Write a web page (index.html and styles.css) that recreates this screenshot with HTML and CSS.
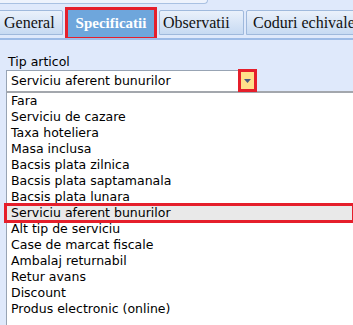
FILE: index.html
```html
<!DOCTYPE html>
<html lang="ro">
<head>
  <meta charset="UTF-8">
  <title>Specificatii articol</title>
  <link rel="stylesheet" href="styles.css">
</head>
<body>
<div class="frame-top"></div>
<div class="tabs">
  <div class="tab">General</div>
  <div class="tab active">Specificatii</div>
  <div class="tab">Observatii</div>
  <div class="tab">Coduri echivalente</div>
</div>
<div class="panel">
  <div class="label">Tip articol</div>
  <div class="combo">
    <div class="combo-value">Serviciu aferent bunurilor</div>
    <div class="combo-btn">
      <svg width="7" height="4" viewBox="0 0 7 4"><path d="M0 0h7L3.5 4z" fill="#4a5a80"/></svg>
    </div>
  </div>
  <ul class="list">
    <li>Fara</li>
    <li>Serviciu de cazare</li>
    <li>Taxa hoteliera</li>
    <li>Masa inclusa</li>
    <li>Bacsis plata zilnica</li>
    <li>Bacsis plata saptamanala</li>
    <li>Bacsis plata lunara</li>
    <li class="selected">Serviciu aferent bunurilor</li>
    <li>Alt tip de serviciu</li>
    <li>Case de marcat fiscale</li>
    <li>Ambalaj returnabil</li>
    <li>Retur avans</li>
    <li>Discount</li>
    <li>Produs electronic (online)</li>
  </ul>
</div>
</body>
</html>
```

FILE: styles.css
```css
* {
  box-sizing: border-box;
}
body {
  margin: 0;
  background: #dfe9fb;
  font-family: "DejaVu Sans", Verdana, sans-serif;
  font-size: 12.5px;
  color: #000;
  overflow: hidden;
}
.frame-top {
  width: 208px;
  height: 4px;
  border-bottom: 1px solid #a9c1e2;
  border-right: 1px solid #a9c1e2;
  border-bottom-right-radius: 6px;
  background: #eef3fc;
}
.tabs {
  display: flex;
  align-items: flex-start;
  gap: 2px;
  height: 36px;
  border-bottom: 2px solid #9dbbe6;
  white-space: nowrap;
  overflow: hidden;
}
.tab {
  flex-shrink: 0;
  margin-top: 6px;
  height: 25px;
  line-height: 23px;
  padding: 0 6px;
  font-family: "Liberation Serif", "Times New Roman", serif;
  font-size: 16px;
  color: #111;
  background: linear-gradient(#eaf1fb, #c7daf2);
  border: 1px solid #9fb9dc;
  border-radius: 2px 2px 0 0;
}
.tab:first-child {
  margin-left: -2px;
  padding-left: 5px;
  width: 65px;
}
.tab:nth-child(3) {
  width: 85px;
  padding-left: 3px;
}
.tab.active {
  position: relative;
  margin-top: 3px;
  width: 92px;
  height: 33px;
  line-height: 26px;
  padding: 0;
  text-align: center;
  font-size: 15px;
  background: #6ea6dc;
  color: #fff;
  font-weight: bold;
  border: 3px solid #e51f2b;
  border-radius: 0;
}
.panel {
  padding: 14px 0 0 6px;
}
.label {
  padding-left: 2px;
  height: 16px;
  line-height: 15px;
}
.combo {
  display: flex;
  height: 21px;
  width: 251px;
  border-top: 1px solid #98a4b4;
}
.combo-value {
  flex: 1;
  background: #fff;
  border-left: 1px solid #98a4b4;
  padding-left: 4px;
  line-height: 20px;
}
.combo-btn {
  width: 19px;
  height: 23px;
  margin-top: -2px;
  background: #ffe08a;
  border: 3px solid #e51f2b;
  display: flex;
  align-items: center;
  justify-content: center;
}
.list {
  list-style: none;
  margin: 0;
  padding: 0 0 20px;
  background: #fff;
  border-top: 2px solid #a3a7ad;
  border-left: 1px solid #98a4b4;
}
.list li {
  height: 16px;
  line-height: 16px;
  padding-left: 4px;
}
.list li.selected {
  background: #e9e9e9;
  outline: 3px solid #e51f2b;
  outline-offset: -1px;
  margin-left: -1px;
  padding-left: 5px;
}
```
